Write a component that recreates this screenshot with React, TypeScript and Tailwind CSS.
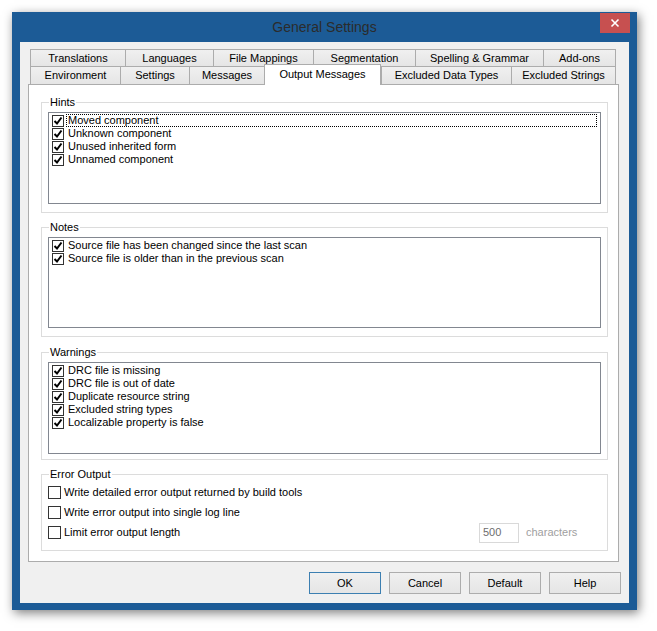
import React from "react";

type TabDef = { label: string; w: string; active?: boolean };

const backTabs: TabDef[] = [
  { label: "Translations", w: "w-[95px]" },
  { label: "Languages", w: "w-[88px]" },
  { label: "File Mappings", w: "w-[100px]" },
  { label: "Segmentation", w: "w-[102px]" },
  { label: "Spelling & Grammar", w: "w-[128px]" },
  { label: "Add-ons", w: "w-[73px]" },
];

const frontTabs: TabDef[] = [
  { label: "Environment", w: "w-[90px]" },
  { label: "Settings", w: "w-[69px]" },
  { label: "Messages", w: "w-[75px]" },
  { label: "Output Messages", w: "w-[117px]", active: true },
  { label: "Excluded Data Types", w: "w-[130px]" },
  { label: "Excluded Strings", w: "w-[105px]" },
];

const Tab = ({ tab, last, h }: { tab: TabDef; last: boolean; h: string }) => {
  if (tab.active) {
    return (
      <div
        className={`${tab.w} relative z-10 -mb-px flex h-[21px] items-center justify-center border-x border-t border-[#acacac] bg-white pb-[1px]`}
      >
        {tab.label}
      </div>
    );
  }
  return (
    <div
      className={`${tab.w} ${h} flex items-center justify-center border-l border-t border-[#acacac] bg-gradient-to-b from-[#f0f0f0] to-[#e5e5e5] ${
        last ? "border-r" : ""
      }`}
    >
      {tab.label}
    </div>
  );
};

const ListCheck = () => (
  <span className="flex h-[12px] w-[12px] shrink-0 items-center justify-center border border-[#333] bg-white">
    <svg width="10" height="10" viewBox="0 0 10 10">
      <path d="M1.5 5 L4 7.5 L8.5 1.5" fill="none" stroke="#000" strokeWidth="2" />
    </svg>
  </span>
);

const CheckList = ({ items, h, focusFirst }: { items: string[]; h: string; focusFirst?: boolean }) => (
  <div className={`${h} mx-[6px] mt-[3px] border border-[#828790] bg-white px-[3px] pt-[1px]`}>
    {items.map((item, i) => (
      <div key={item} className="flex h-[13px] items-center gap-[2px] leading-[13px]">
        <ListCheck />
        <span
          className={`flex h-[13px] flex-1 items-center pl-[1px] ${
            focusFirst && i === 0 ? "border border-dotted border-black" : "border border-transparent"
          }`}
        >
          {item}
        </span>
      </div>
    ))}
  </div>
);

const Group = ({ title, h, children }: { title: string; h: string; children: React.ReactNode }) => (
  <fieldset className={`${h} border border-[#dcdcdc] px-0`}>
    <legend className="ml-[7px] px-[1px] leading-[14px]">{title}</legend>
    {children}
  </fieldset>
);

const Box = () => <span className="h-[13px] w-[13px] shrink-0 border border-[#333] bg-white" />;

const Button = ({ label, def }: { label: string; def?: boolean }) => (
  <button
    className={`flex h-[22px] w-[72px] items-center justify-center border bg-gradient-to-b from-[#f0f0f0] to-[#e5e5e5] ${
      def ? "border-[#3c7fb1]" : "border-[#adadad]"
    }`}
  >
    {label}
  </button>
);

export default function App() {
  return (
    <div className="h-[631px] w-[657px] bg-white pl-[12px] pt-[12px] font-['Liberation_Sans',Arial,sans-serif] text-[11px] leading-[13px] text-black">
      <div className="relative flex h-[598px] w-[625px] flex-col bg-[#1c5b96] px-[8px] pb-[7px] shadow-[2px_3px_10px_rgba(0,0,0,0.5)]">
        {/* title bar */}
        <div className="flex h-[30px] items-center justify-center pt-[1px] text-[14px] text-[#2b2b2b]">
          General Settings
        </div>
        <div className="absolute right-[7px] top-[1px] flex h-[20px] w-[30px] items-center justify-center bg-[#c75050]">
          <svg width="10" height="10" viewBox="0 0 10 10">
            <path d="M1.5 1.5 L8.5 8.5 M8.5 1.5 L1.5 8.5" stroke="#fff" strokeWidth="1.6" />
          </svg>
        </div>

        {/* client */}
        <div className="flex flex-1 flex-col bg-[#f0f0f0] pl-[8px] pr-[10px] pt-[7px]">
          <div className="ml-[2px] flex">
            {backTabs.map((t, i) => (
              <Tab key={t.label} tab={t} last={i === backTabs.length - 1} h="h-[17px]" />
            ))}
          </div>
          <div className="ml-[2px] flex h-[18px] items-end">
            {frontTabs.map((t, i) => (
              <Tab key={t.label} tab={t} last={i === frontTabs.length - 1} h="h-[18px]" />
            ))}
          </div>

          {/* tab page */}
          <div className="flex h-[478px] flex-col border border-[#acacac] bg-white pl-[12px] pr-[10px] pt-[10px]">
            <Group title="Hints" h="h-[118px]">
              <CheckList
                h="h-[92px]"
                focusFirst
                items={["Moved component", "Unknown component", "Unused inherited form", "Unnamed component"]}
              />
            </Group>
            <div className="h-[7px]" />
            <Group title="Notes" h="h-[117px]">
              <CheckList
                h="h-[91px]"
                items={[
                  "Source file has been changed since the last scan",
                  "Source file is older than in the previous scan",
                ]}
              />
            </Group>
            <div className="h-[8px]" />
            <Group title="Warnings" h="h-[115px]">
              <CheckList
                h="h-[92px]"
                items={[
                  "DRC file is missing",
                  "DRC file is out of date",
                  "Duplicate resource string",
                  "Excluded string types",
                  "Localizable property is false",
                ]}
              />
            </Group>
            <div className="h-[7px]" />
            <Group title="Error Output" h="h-[84px]">
              <div className="flex flex-col gap-[7px] pl-[6px] pt-[5px]">
                <div className="flex h-[13px] items-center gap-[3px]">
                  <Box />
                  <span>Write detailed error output returned by build tools</span>
                </div>
                <div className="flex h-[13px] items-center gap-[3px]">
                  <Box />
                  <span>Write error output into single log line</span>
                </div>
                <div className="flex h-[13px] items-center gap-[3px]">
                  <Box />
                  <span>Limit error output length</span>
                  <span className="flex-1" />
                  <span className="flex h-[20px] w-[40px] shrink-0 items-center border border-[#d9d9d9] bg-white pl-[3px] text-[#6d6d6d]">
                    500
                  </span>
                  <span className="ml-[4px] w-[81px] shrink-0 text-[#a0a0a0]">characters</span>
                </div>
              </div>
            </Group>
          </div>

          {/* buttons */}
          <div className="mr-[-2px] mt-[10px] flex justify-end gap-[8px]">
            <Button label="OK" def />
            <Button label="Cancel" />
            <Button label="Default" />
            <Button label="Help" />
          </div>
        </div>
      </div>
    </div>
  );
}
